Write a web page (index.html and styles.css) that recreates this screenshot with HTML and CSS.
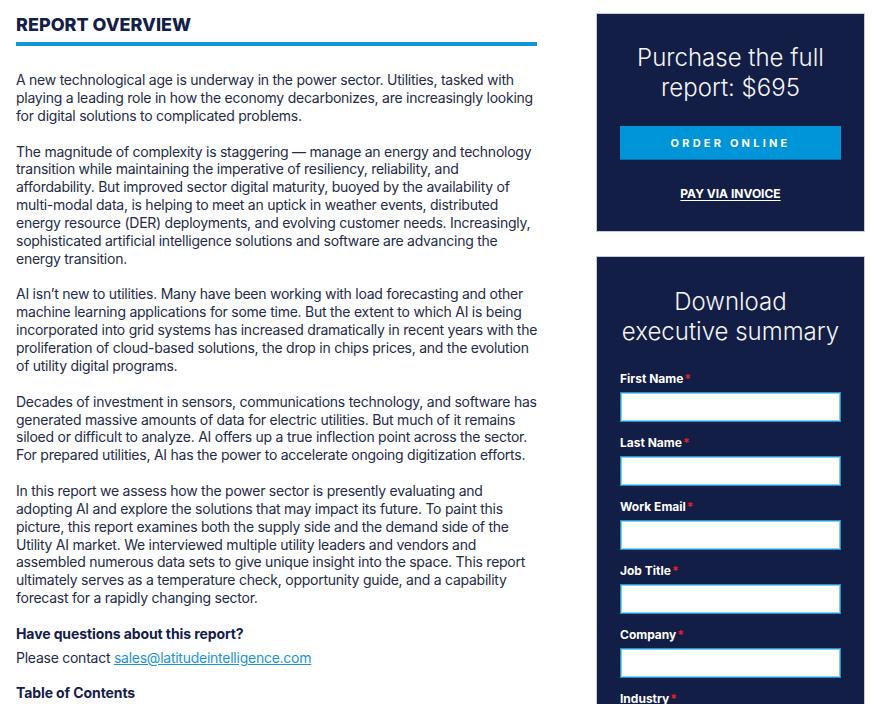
FILE: index.html
```html
<!DOCTYPE html>
<html lang="en">
<head>
<meta charset="utf-8">
<title>Report Overview</title>
<link rel="stylesheet" href="styles.css">
</head>
<body>
<div class="page">
  <main class="main">
    <h1 class="title">REPORT OVERVIEW</h1>
    <div class="rule"></div>
    <div class="body">
      <p>A new technological age is underway in the power sector. Utilities, tasked with playing a leading role in how the economy decarbonizes, are increasingly looking for digital solutions to complicated problems.</p>
      <p>The magnitude of complexity is staggering — manage an energy and technology transition while maintaining the imperative of resiliency, reliability, and affordability. But improved sector digital maturity, buoyed by the availability of multi-modal data, is helping to meet an uptick in weather events, distributed energy resource (DER) deployments, and evolving customer needs. Increasingly, sophisticated artificial intelligence solutions and software are advancing the energy transition.</p>
      <p>AI isn’t new to utilities. Many have been working with load forecasting and other machine learning applications for some time. But the extent to which AI is being incorporated into grid systems has increased dramatically in recent years with the proliferation of cloud-based solutions, the drop in chips prices, and the evolution of utility digital programs.</p>
      <p>Decades of investment in sensors, communications technology, and software has generated massive amounts of data for electric utilities. But much of it remains siloed or difficult to analyze. AI offers up a true inflection point across the sector. For prepared utilities, AI has the power to accelerate ongoing digitization efforts.</p>
      <p>In this report we assess how the power sector is presently evaluating and adopting AI and explore the solutions that may impact its future. To paint this picture, this report examines both the supply side and the demand side of the Utility AI market. We interviewed multiple utility leaders and vendors and assembled numerous data sets to give unique insight into the space. This report ultimately serves as a temperature check, opportunity guide, and a capability forecast for a rapidly changing sector.</p>
      <h3 class="sub">Have questions about this report?</h3>
      <p class="contact">Please contact <a href="#" class="link">sales@latitudeintelligence.com</a></p>
      <h3 class="sub">Table of Contents</h3>
    </div>
  </main>
  <aside class="side">
    <section class="card buy">
      <h2 class="card-title">Purchase the full report: $695</h2>
      <a href="#" class="btn">ORDER ONLINE</a>
      <a href="#" class="invoice">PAY VIA INVOICE</a>
    </section>
    <section class="card form">
      <h2 class="card-title">Download executive summary</h2>
      <div class="field"><label class="label">First Name<span class="req">*</span></label><input class="input" type="text"></div>
      <div class="field"><label class="label">Last Name<span class="req">*</span></label><input class="input" type="text"></div>
      <div class="field"><label class="label">Work Email<span class="req">*</span></label><input class="input" type="text"></div>
      <div class="field"><label class="label">Job Title<span class="req">*</span></label><input class="input" type="text"></div>
      <div class="field"><label class="label">Company<span class="req">*</span></label><input class="input" type="text"></div>
      <div class="field"><label class="label">Industry<span class="req">*</span></label><input class="input" type="text"></div>
    </section>
  </aside>
</div>
</body>
</html>
```

FILE: styles.css
```css
* { box-sizing: border-box; }
html, body { margin: 0; padding: 0; background: #fff; }
body {
  font-family: Inter, "Noto Sans", sans-serif;
  color: #252b48;
  overflow: hidden;
}
.page {
  display: flex;
  align-items: flex-start;
  gap: 59px;
  padding: 13px 0 0 16px;
}
.main { width: 521px; flex: none; }
.title {
  margin: 1px 0 0;
  font-size: 18px;
  line-height: 22px;
  font-weight: 800;
  color: #14204a;
}
.rule {
  margin-top: 6px;
  height: 4px;
  background: #0d96d9;
}
.body {
  margin: 25px -3px 0 0;
  font-size: 14px;
  line-height: 17.85px;
  letter-spacing: -0.25px;
}
.body p { margin: 0 0 18px; }
.sub {
  margin: 0;
  font-size: 14px;
  line-height: 18px;
  font-weight: 700;
  letter-spacing: -0.1px;
  color: #14204a;
}
.body .contact { margin: 6px 0 17px; }
.link { color: #1a95d6; text-decoration: underline; }
.side { width: 269px; flex: none; display: flex; flex-direction: column; gap: 24px; }
.card {
  background: #121e45;
  border: 1px solid #c9ccd6;
  padding: 29px 23px 0;
  color: #fff;
}
.card-title {
  margin: 0;
  font-size: 24px;
  line-height: 30px;
  font-weight: 300;
  text-align: center;
  color: #f4f5f8;
}
.buy { padding-bottom: 29px; }
.btn {
  display: block;
  margin-top: 23px;
  height: 34px;
  line-height: 34px;
  background: #0095d9;
  border-bottom: 1px solid #0a6fa8;
  color: #fff;
  text-align: center;
  text-decoration: none;
  font-size: 11px;
  font-weight: 700;
  letter-spacing: 3.2px;
}
.invoice {
  display: block;
  width: max-content;
  margin: 26px auto 0;
  color: #fff;
  font-size: 12px;
  font-weight: 700;
  line-height: 16px;
  text-decoration: underline;
  text-underline-offset: 2px;
}
.form { padding-top: 30px; padding-bottom: 20px; }
.field { display: flex; flex-direction: column; }
.field:first-of-type { margin-top: 24px; }
.field + .field { margin-top: 13px; }
.label {
  font-size: 12px;
  line-height: 16px;
  font-weight: 700;
  color: #fff;
}
.req { color: #e8212b; margin-left: 1px; }
.input {
  margin-top: 5px;
  height: 30px;
  width: 100%;
  border: 1px solid #1b95d3;
  box-shadow: inset 0 0 0 1px #8ccbea;
  background: #fff;
  font: inherit;
}
```
